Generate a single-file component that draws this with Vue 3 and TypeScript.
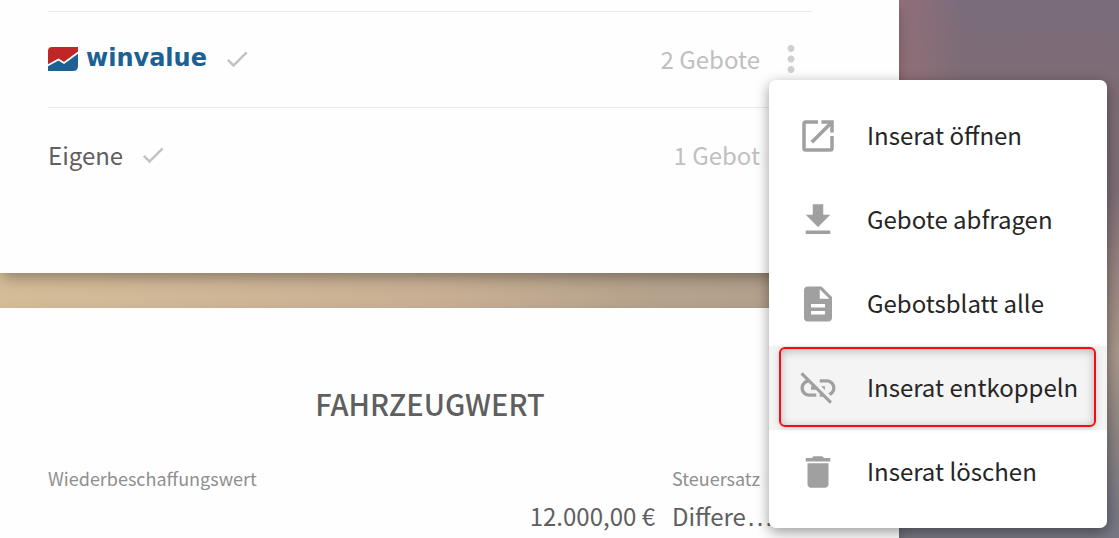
<script setup lang="ts">
import { ref } from 'vue'

interface MenuEntry {
  id: string
  label: string
  path: string
  active?: boolean
}

const entries: MenuEntry[] = [
  {
    id: 'open',
    label: 'Inserat öffnen',
    path: 'M11 3H5a2 2 0 0 0-2 2v14a2 2 0 0 0 2 2h14a2 2 0 0 0 2-2v-7h-2v7H5V5h7V3zM14 3v2h3.59l-9.83 9.83 1.41 1.41L19 6.41V10h2V3z',
  },
  { id: 'fetch', label: 'Gebote abfragen', path: 'M19 9h-4V3H9v6H5l7 7 7-7zM5 18v2h14v-2H5z' },
  {
    id: 'sheet',
    label: 'Gebotsblatt alle',
    path: 'M14 2H6c-1.1 0-1.99.9-1.99 2L4 20c0 1.1.89 2 1.99 2H18c1.1 0 2-.9 2-2V8l-6-6zm2 16H8v-2h8v2zm0-4H8v-2h8v2zm-3-5V3.5L18.5 9H13z',
  },
  {
    id: 'unlink',
    label: 'Inserat entkoppeln',
    active: true,
    path: 'M17 7h-4v1.9h4c1.71 0 3.1 1.39 3.1 3.1 0 1.43-.98 2.63-2.31 2.98l1.46 1.46C20.88 15.61 22 13.95 22 12c0-2.76-2.24-5-5-5zm-1 4h-2.19l2 2H16v-2zM2 4.27l3.11 3.11C3.29 8.12 2 9.91 2 12c0 2.76 2.24 5 5 5h4v-1.9H7c-1.71 0-3.1-1.39-3.1-3.1 0-1.59 1.21-2.9 2.76-3.07L8.73 11H8v2h2.73L13 15.27V17h1.73l4.01 4L20 19.74 3.27 3 2 4.27z',
  },
  {
    id: 'delete',
    label: 'Inserat löschen',
    path: 'M6 19c0 1.1.9 2 2 2h8c1.1 0 2-.9 2-2V7H6v12zM19 4h-3.5l-1-1h-5l-1 1H5v2h14V4z',
  },
]

const price = ref('12.000,00 €')
const taxRate = ref('diff')
</script>

<template>
  <main class="page">
    <section class="card offers">
      <div class="row">
        <span class="brand">
          <svg class="logo" viewBox="0 0 30 24" aria-hidden="true">
            <path d="M4 0H30V6L16 16 10.500 12.500 0 19V4Q0 0 4 0Z" fill="#c02626" />
            <path d="M0 18.500L10.500 12.500 16 16 30 5.500V19Q30 24 25 24H0Z" fill="#1b6194" />
            <path d="M-1 18.800L10.500 12.500 16 16 31 5" fill="none" stroke="#fff" stroke-width="1.800" />
          </svg>
          <span class="wordmark">winvalue</span>
        </span>
        <svg class="check" viewBox="0 0 24 24" aria-hidden="true">
          <path d="M9 16.170L4.830 12l-1.420 1.410L9 19 21 7l-1.410-1.410z" />
        </svg>
        <span class="count">2 Gebote</span>
        <div class="menu-anchor">
          <button class="more" type="button" aria-label="Aktionen" aria-haspopup="menu" aria-expanded="true">
            <svg viewBox="0 0 24 24" aria-hidden="true">
              <path d="M12 8c1.100 0 2-.9 2-2s-.9-2-2-2-2 .9-2 2 .9 2 2 2zm0 2c-1.100 0-2 .9-2 2s.9 2 2 2 2-.9 2-2-.9-2-2-2zm0 6c-1.100 0-2 .9-2 2s.9 2 2 2 2-.9 2-2-.9-2-2-2z" />
            </svg>
          </button>
        </div>
      </div>
      <div class="row">
        <span class="name">Eigene</span>
        <svg class="check" viewBox="0 0 24 24" aria-hidden="true">
          <path d="M9 16.170L4.830 12l-1.420 1.410L9 19 21 7l-1.410-1.410z" />
        </svg>
        <span class="count">1 Gebot</span>
        <div class="menu-anchor"></div>
      </div>
    </section>

    <section class="card value">
      <h2>FAHRZEUGWERT</h2>
      <div class="fields">
        <div class="field">
          <label for="price">Wiederbeschaffungswert</label>
          <input id="price" v-model="price" type="text" />
        </div>
        <div class="field">
          <label for="tax">Steuersatz</label>
          <div class="tax">
            <select id="tax" v-model="taxRate">
              <option value="diff">Differe</option>
            </select>
            <span class="dots" aria-hidden="true">…</span>
          </div>
        </div>
      </div>
    </section>

    <div class="menu" role="menu">
      <button
        v-for="entry in entries"
        :key="entry.id"
        type="button"
        role="menuitem"
        class="item"
        :class="{ active: entry.active }"
      >
        <svg viewBox="0 0 24 24" aria-hidden="true"><path :d="entry.path" /></svg>
        <span class="text">{{ entry.label }}</span>
      </button>
    </div>
  </main>
</template>

<style>
body {
  margin: 0;
}
</style>

<style scoped>
.page {
  position: relative;
  box-sizing: border-box;
  min-height: 100vh;
  padding-right: 220px;
  overflow: hidden;
  display: flex;
  flex-direction: column;
  gap: 35px;
  font-family: 'Noto Sans CJK KR', 'Noto Sans', sans-serif;
  font-size: 24px;
  line-height: 36px;
  color: #5f5f5f;
  background:
    linear-gradient(90deg, rgba(150, 112, 120, 0.8) 0%, rgba(150, 112, 120, 0) 30%) right top / 220px 100px no-repeat,
    linear-gradient(180deg, #7a6c7c 0%, #7e6c75 14%, #7e6d76 36%, #9a8580 52%, #a8978a 66%, #8a8282 82%, #777783 95%) right / 220px 100% no-repeat,
    linear-gradient(90deg, #d5bc98 0%, #c9b094 38%, #b8a48d 55%, #ac9989 85%);
}

.card {
  background: #fefefe;
  box-shadow: 0 7px 14px -3px rgba(0, 0, 0, 0.35);
  padding: 0 87px 0 48px;
}

.offers {
  padding-top: 11px;
  padding-bottom: 70px;
}

.row {
  box-sizing: border-box;
  display: flex;
  align-items: center;
  height: 96px;
  padding-bottom: 2px;
  border-top: 1px solid #ebebeb;
}

.brand {
  display: flex;
  align-items: flex-start;
  gap: 8px;
}

.logo {
  width: 30px;
  height: 24px;
}

.wordmark {
  font-family: 'DejaVu Sans', sans-serif;
  font-weight: 700;
  font-size: 24px;
  line-height: 22px;
  color: #1b6194;
}

.check {
  width: 28px;
  height: 28px;
  margin-left: 16px;
  fill: #c2c2c2;
}

.count {
  margin-left: auto;
  color: #c0c0c0;
}

.menu-anchor {
  width: 52px;
  display: flex;
  justify-content: flex-end;
}

.more {
  display: flex;
  padding: 0;
  border: 0;
  background: none;
}

.more svg {
  width: 42px;
  height: 42px;
  fill: #cfcfcf;
}

.value {
  flex: 1;
  padding-top: 77px;
}

h2 {
  margin: 0;
  font-size: 29px;
  line-height: 36px;
  font-weight: 500;
  text-align: center;
}

.fields {
  display: grid;
  grid-template-columns: 1fr 99px;
  gap: 17px;
  margin-top: 43px;
  padding-right: 41px;
}

.field {
  display: flex;
  flex-direction: column;
  gap: 6px;
}

label {
  font-size: 18px;
  line-height: 28px;
  color: #8f8f8f;
}

input,
select {
  box-sizing: border-box;
  height: 36px;
  margin: 0;
  padding: 0;
  border: 0;
  background: none;
  font: inherit;
  color: inherit;
  appearance: none;
}

input {
  width: 100%;
  text-align: right;
}

.tax {
  display: flex;
  align-items: baseline;
}

.dots {
  font-family: 'Liberation Sans', sans-serif;
  font-size: 28px;
}

.menu {
  position: absolute;
  top: 80px;
  right: 12px;
  width: 338px;
  box-sizing: border-box;
  padding: 14px 0;
  border-radius: 7px;
  background: #fff;
  box-shadow: 0 4px 14px rgba(0, 0, 0, 0.4);
}

.item {
  position: relative;
  display: flex;
  align-items: center;
  gap: 28px;
  width: 100%;
  height: 84px;
  padding: 0 28px;
  border: 0;
  background: none;
  font: inherit;
  color: #252525;
  white-space: nowrap;
}

.item svg {
  flex: none;
  width: 42px;
  height: 42px;
  fill: #a0a0a0;
}

.text {
  padding-bottom: 2px;
}

.item.active {
  background: #f4f4f4;
}

.item.active::after {
  content: '';
  position: absolute;
  inset: 1px 11px 3px 10px;
  border: 2px solid #f80c0c;
  border-radius: 6px;
  box-shadow: inset 0 2px 10px rgba(0, 0, 0, 0.25), 0 1px 6px rgba(0, 0, 0, 0.15);
}
</style>
